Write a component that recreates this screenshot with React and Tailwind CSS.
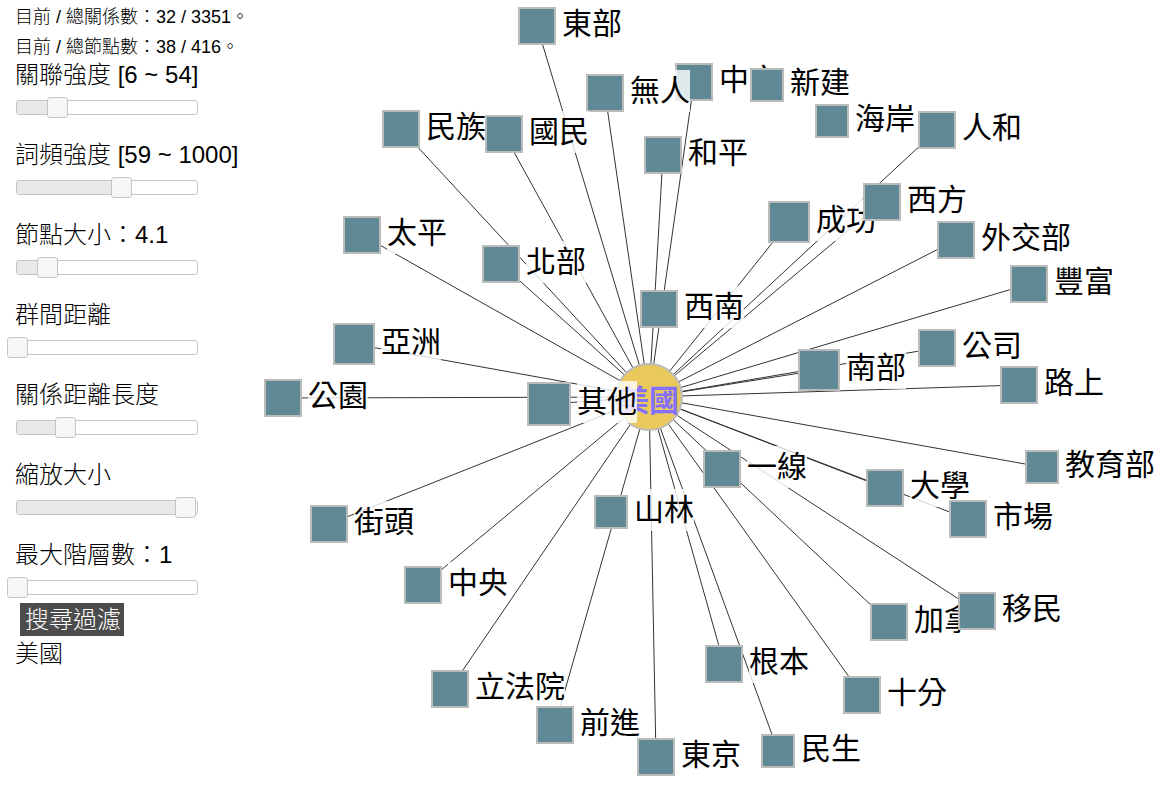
import { useState } from "react";

const HUB = { x: 393, y: 397 };

// x / y are the centre of each square on the graph canvas; `linked` nodes get an edge to the hub.
const NODES = [
  { name: "東部", x: 281, y: 26, size: 38, linked: true },
  { name: "中文", x: 438, y: 82, size: 38, linked: true },
  { name: "新建", x: 511, y: 85, size: 34, linked: false },
  { name: "無人", x: 349, y: 93, size: 38, linked: true },
  { name: "海岸", x: 576, y: 121, size: 34, linked: false },
  { name: "民族", x: 145, y: 129, size: 38, linked: true },
  { name: "國民", x: 248, y: 134, size: 38, linked: true },
  { name: "人和", x: 681, y: 130, size: 38, linked: true },
  { name: "和平", x: 407, y: 155, size: 38, linked: true },
  { name: "成功", x: 533, y: 222, size: 42, linked: true },
  { name: "西方", x: 626, y: 202, size: 38, linked: true },
  { name: "外交部", x: 700, y: 240, size: 38, linked: true },
  { name: "太平", x: 106, y: 235, size: 38, linked: true },
  { name: "北部", x: 245, y: 264, size: 38, linked: true },
  { name: "豐富", x: 773, y: 284, size: 38, linked: true },
  { name: "西南", x: 403, y: 309, size: 38, linked: false },
  { name: "亞洲", x: 98, y: 344, size: 42, linked: true },
  { name: "公司", x: 681, y: 348, size: 38, linked: true },
  { name: "南部", x: 563, y: 370, size: 42, linked: true },
  { name: "路上", x: 763, y: 385, size: 38, linked: true },
  { name: "公園", x: 27, y: 398, size: 38, linked: true },
  { name: "其他", x: 293, y: 404, size: 44, linked: true },
  { name: "教育部", x: 786, y: 467, size: 34, linked: true },
  { name: "一線", x: 466, y: 469, size: 38, linked: false },
  { name: "大學", x: 629, y: 488, size: 38, linked: true },
  { name: "市場", x: 712, y: 519, size: 38, linked: true },
  { name: "山林", x: 355, y: 512, size: 34, linked: false },
  { name: "街頭", x: 73, y: 524, size: 38, linked: true },
  { name: "中央", x: 167, y: 585, size: 38, linked: true },
  { name: "加拿", x: 633, y: 622, size: 38, linked: true },
  { name: "移民", x: 721, y: 611, size: 38, linked: true },
  { name: "根本", x: 468, y: 664, size: 38, linked: true },
  { name: "立法院", x: 194, y: 689, size: 38, linked: true },
  { name: "十分", x: 606, y: 695, size: 38, linked: true },
  { name: "前進", x: 299, y: 725, size: 38, linked: true },
  { name: "民生", x: 522, y: 751, size: 34, linked: true },
  { name: "東京", x: 400, y: 757, size: 38, linked: true },
];

const CONTROLS = [
  { id: "relation", label: "關聯強度 [6 ~ 54]", value: 40 },
  { id: "frequency", label: "詞頻強度 [59 ~ 1000]", value: 104 },
  { id: "node-size", label: "節點大小：4.1", value: 30 },
  { id: "group-gap", label: "群間距離", value: 0 },
  { id: "link-length", label: "關係距離長度", value: 48 },
  { id: "zoom", label: "縮放大小", value: 168 },
  { id: "max-level", label: "最大階層數：1", value: 0 },
];

const SLIDER_MAX = 181;

function SliderControl({ id, label, initial }) {
  const [value, setValue] = useState(initial);
  return (
    <div>
      <label htmlFor={id} className="block whitespace-nowrap text-2xl leading-7">
        {label}
      </label>
      <div className="-ml-2 mt-2 grid w-[202px] items-center">
        <div className="col-start-1 row-start-1 ml-[9px] mr-[11px] h-[15px] overflow-hidden rounded-[3px] border border-[#c5c5c5] bg-white">
          <div className="h-full bg-[#e9e9e9]" style={{ width: `${(value / SLIDER_MAX) * 100}%` }} />
        </div>
        <input
          id={id}
          type="range"
          min="0"
          max={SLIDER_MAX}
          value={value}
          onChange={(e) => setValue(Number(e.target.value))}
          className="col-start-1 row-start-1 m-0 h-[21px] w-full cursor-pointer appearance-none bg-transparent [&::-webkit-slider-thumb]:h-[21px] [&::-webkit-slider-thumb]:w-[21px] [&::-webkit-slider-thumb]:appearance-none [&::-webkit-slider-thumb]:rounded-[3px] [&::-webkit-slider-thumb]:border [&::-webkit-slider-thumb]:border-solid [&::-webkit-slider-thumb]:border-[#c5c5c5] [&::-webkit-slider-thumb]:bg-[#f6f6f6]"
        />
      </div>
    </div>
  );
}

function GraphNode({ name, x, y, size }) {
  return (
    <>
      <div
        className="absolute border-2 border-[#bbbbbb] bg-[#5f8a95]"
        style={{ left: x - size / 2, top: y - size / 2, width: size, height: size }}
      />
      <span
        className="absolute h-[42px] whitespace-nowrap bg-white/80 text-[30px] leading-[42px]"
        style={{ left: x + size / 2 + 6, top: y - 23 }}
      >
        {name}
      </span>
    </>
  );
}

export default function App() {
  return (
    <div
      lang="zh-Hant"
      className="flex min-h-screen overflow-hidden bg-white font-['Liberation_Sans','Noto_Sans_CJK_TC',sans-serif] text-black"
    >
      <aside className="w-64 shrink-0 pl-[15px] pt-0.5 font-light">
        <p className="whitespace-nowrap text-lg leading-[30px]">目前 / 總關係數：32 / 3351。</p>
        <p className="whitespace-nowrap text-lg leading-[30px]">目前 / 總節點數：38 / 416。</p>
        <div className="-mt-px flex flex-col gap-[23px]">
          {CONTROLS.map((c) => (
            <SliderControl key={c.id} id={c.id} label={c.label} initial={c.value} />
          ))}
        </div>
        <button
          type="button"
          className="ml-[5px] mt-[5px] block bg-[#4c4c4c] pl-[5px] pr-[3px] text-2xl leading-[33px] text-white"
        >
          搜尋過濾
        </button>
        <p className="mt-1 text-2xl leading-7">美國</p>
      </aside>
      <main className="relative min-w-0 flex-1">
        <svg className="absolute inset-0 h-full w-full" aria-hidden="true">
          {NODES.filter((n) => n.linked).map((n) => (
            <line key={n.name} x1={HUB.x} y1={HUB.y} x2={n.x} y2={n.y} stroke="#333333" strokeWidth="1" />
          ))}
        </svg>
        <div
          className="absolute flex h-[68px] w-[68px] items-center justify-center rounded-full border-2 border-[#bbbbbb] bg-[#e9c95c] pt-2 text-[30px] font-bold leading-10 text-[#8470ff]"
          style={{ left: HUB.x - 34, top: HUB.y - 34 }}
        >
          <span className="whitespace-nowrap">美國</span>
        </div>
        {NODES.map((n) => (
          <GraphNode key={n.name} {...n} />
        ))}
      </main>
    </div>
  );
}
